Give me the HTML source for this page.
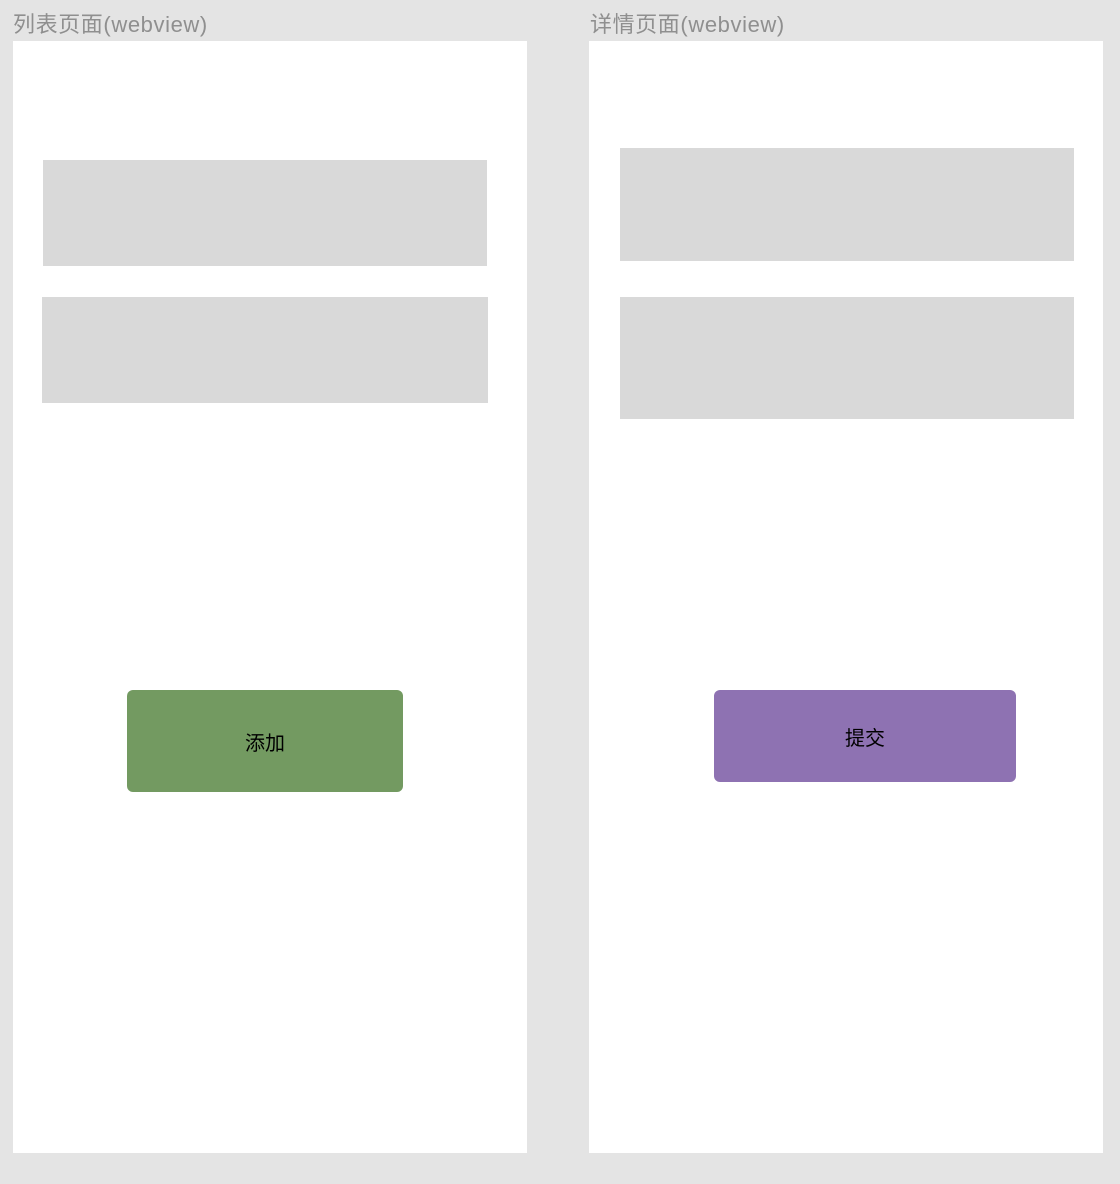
<!DOCTYPE html>
<html><head><meta charset="utf-8"><style>
html,body{margin:0;padding:0}
body{width:1120px;height:1184px;background:#e4e4e4;position:relative;overflow:hidden;font-family:"Liberation Sans","Noto Sans CJK SC",sans-serif}
div{position:absolute}
.lbl{color:#8f8f8f;font-size:22px;line-height:26px;top:12px;letter-spacing:0.6px}
.panel{background:#fff;top:41px;width:514px;height:1112px}
.g{background:#d9d9d9}
.btn{border-radius:6px;color:#000;font-size:20px;display:flex;align-items:center;justify-content:center}
</style></head><body>
<div class="lbl" style="left:13px">列表页面(webview)</div>
<div class="lbl" style="left:590px">详情页面(webview)</div>
<div class="panel" style="left:13px"></div>
<div class="panel" style="left:589px"></div>
<div class="g" style="left:43px;top:160px;width:444px;height:106px"></div>
<div class="g" style="left:42px;top:297px;width:446px;height:106px"></div>
<div class="g" style="left:620px;top:148px;width:454px;height:113px"></div>
<div class="g" style="left:620px;top:297px;width:454px;height:122px"></div>
<div class="btn" style="left:127px;top:690px;width:276px;height:102px;background:#739a61">添加</div>
<div class="btn" style="left:714px;top:690px;width:302px;height:92px;background:#8e72b2">提交</div>
</body></html>
